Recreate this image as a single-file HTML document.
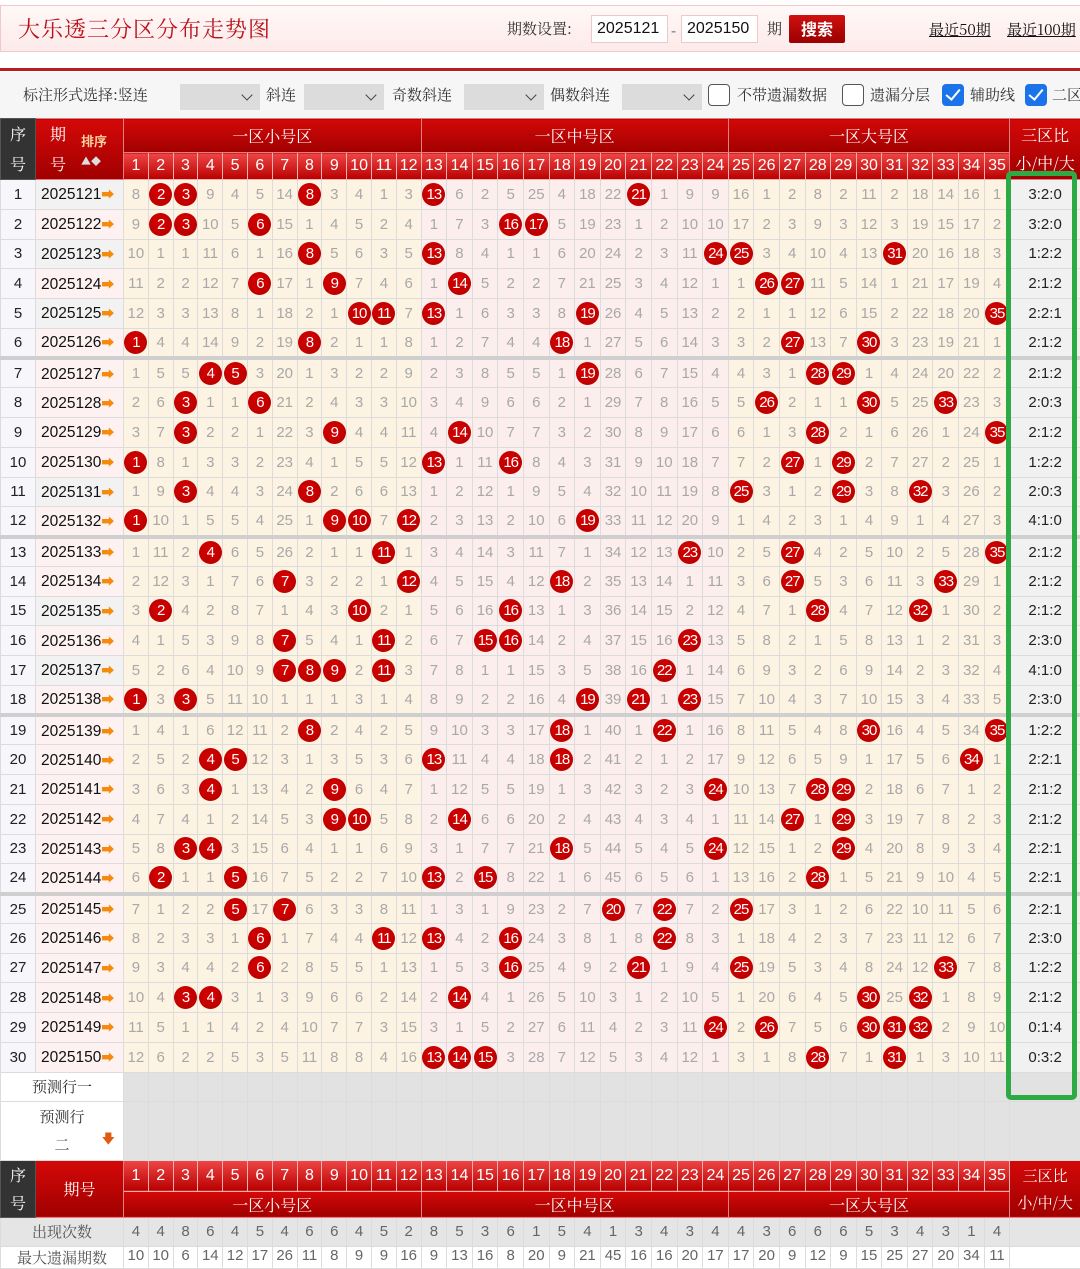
<!DOCTYPE html>
<html><head><meta charset="utf-8">
<style>
*{box-sizing:border-box}
body{margin:0;width:1080px;height:1258px;overflow:hidden;background:#fff;font-family:"Liberation Sans","Noto Sans CJK SC",sans-serif;position:relative}
.top{position:absolute;left:0;top:5px;width:1090px;height:47px;background:linear-gradient(#fff8f8,#fdeaea);border:1px solid #f0caca}
.title{position:absolute;left:18px;top:13px;font:22px "Noto Serif CJK SC",serif;color:#b8141a;letter-spacing:1px}
.lbl{position:absolute;top:18px;font:15px "Noto Serif CJK SC",serif;color:#333}
.inp{position:absolute;top:15px;width:77px;height:28px;border:1px solid #f0c8c8;background:#fff;font-size:16px;padding:4px 0 0 5px;color:#111}
.btn{position:absolute;left:789px;top:15px;width:56px;height:28px;background:linear-gradient(#d01010,#9a0000);color:#fff;font:bold 16px "Noto Sans CJK SC",sans-serif;text-align:center;line-height:27px;border-radius:2px}
.lnk{position:absolute;top:19px;font:15px "Noto Serif CJK SC",serif;color:#111;text-decoration:underline;white-space:nowrap}
.rl{position:absolute;left:0;top:68px;width:1080px;height:3px;background:#b42020}
.flt{position:absolute;left:0;top:72px;width:1080px;height:46px;background:#f6f6f6}
.ft{position:absolute;top:84px;font:15px "Noto Serif CJK SC",serif;color:#333;white-space:nowrap}
.sel{position:absolute;top:84px;width:80px;height:26px;background:#dcdcdc}
.sel:after{content:"";position:absolute;right:9px;top:7px;width:7px;height:7px;border-right:1.5px solid #444;border-bottom:1.5px solid #444;transform:rotate(45deg)}
.cb{position:absolute;top:84px;width:22px;height:22px;border:1.5px solid #555;border-radius:4px;background:#fff}
.cb.on{background:#1a73e8;border-color:#1a73e8}
.cb.on:after{content:"";position:absolute;left:6px;top:1px;width:6px;height:12px;border-right:2.5px solid #fff;border-bottom:2.5px solid #fff;transform:rotate(40deg)}
table{position:absolute;left:0;top:118px;width:1080px;table-layout:fixed;border-collapse:collapse}
td,th{padding:0;text-align:center;overflow:hidden;white-space:nowrap}
th{font-weight:normal;color:#fff}
.h1 th{height:32px;font:16px "Noto Serif CJK SC",serif;background:linear-gradient(#d40808,#a00000);border:1px solid #e08080}
.h1.lo th{height:25px}
.h2 th{height:25px;font-size:16px;background:linear-gradient(#f04646,#b80000);border:1px solid #f3b0b0}
th.dk{background:#333 !important;font:16px "Noto Serif CJK SC",serif;line-height:28px;border:1px solid #555}
th.qh{position:relative}
.px{position:absolute;left:45px;top:12px;font:bold 13px "Noto Sans CJK SC",sans-serif;color:#fcd0a0}
tbody td{border:1px solid #dcdcdc;color:#a8a8a8;font-size:15px}
.d td{height:29.75px}
td.s{color:#222;background:#f6f6fb}
td.q{color:#111;background:#fdf1f1;text-align:left;padding-left:5px;font-size:15.5px}
td.g{background:#f2f2f2}
td.q i{font-style:normal;color:#f58a0c;font-size:13px;font-weight:bold}
td.r{background:#f1f1f1;color:#222}
b{display:inline-block;width:23px;height:23px;line-height:23px;border-radius:50%;background:radial-gradient(circle at 45% 40%,#d80000,#b00000);color:#fff;font-weight:normal;font-size:15px;letter-spacing:-1px;vertical-align:middle}
.sp td{border-top:4px solid #cfcfcf}
.yc td{background:#e2e2e2}
.yc td.w{background:#fff;color:#333;font:15px "Noto Serif CJK SC",serif}
.yc td.lv{background:#e0e0f0}
.cnt td{background:#e5e5e5;height:29px;color:#666}
.cnt td.w{font:15px "Noto Serif CJK SC",serif;color:#555}
.mx td{background:#fff;height:20px;color:#666;vertical-align:top}
.green{position:absolute;left:1006px;top:171px;width:71px;height:929px;border:5px solid #2eaa44;border-radius:5px}
</style></head><body>
<div class="top"></div>
<div class="title">大乐透三分区分布走势图</div>
<div class="lbl" style="left:507px">期数设置:</div>
<div class="inp" style="left:591px">2025121</div>
<div class="lbl" style="left:671px;top:20px">-</div>
<div class="inp" style="left:681px">2025150</div>
<div class="lbl" style="left:767px">期</div>
<div class="btn">搜索</div>
<div class="lnk" style="left:929px">最近50期</div>
<div class="lnk" style="left:1007px">最近100期</div>
<div class="rl"></div>
<div class="flt"></div>
<div class="ft" style="left:23px">标注形式选择:竖连</div>
<div class="sel" style="left:180px"></div>
<div class="ft" style="left:266px">斜连</div>
<div class="sel" style="left:304px"></div>
<div class="ft" style="left:392px">奇数斜连</div>
<div class="sel" style="left:464px"></div>
<div class="ft" style="left:550px">偶数斜连</div>
<div class="sel" style="left:622px"></div>
<div class="cb" style="left:708px"></div>
<div class="ft" style="left:737px">不带遗漏数据</div>
<div class="cb" style="left:842px"></div>
<div class="ft" style="left:870px">遗漏分层</div>
<div class="cb on" style="left:942px"></div>
<div class="ft" style="left:970px">辅助线</div>
<div class="cb on" style="left:1025px"></div>
<div class="ft" style="left:1052px">二区</div>

<table>
<colgroup><col style="width:35px"><col style="width:88px">
<col span="12" style="width:24.8px;background:#fdf3e2"><col span="12" style="width:25.6px;background:#fdeeee"><col span="11" style="width:25.6px;background:#fdf3e2"><col style="width:70.6px">
</colgroup>
<thead>
<tr class="h1"><th rowspan="2" class="dk" style="line-height:30px">序<br>号</th><th rowspan="2" class="qh" style="text-align:left;padding-left:14px;line-height:30px">期<br>号<span class="px">排序<br><span style="color:#ddd;font-size:10px">▲◆</span></span></th><th colspan="12">一区小号区</th><th colspan="12">一区中号区</th><th colspan="11">一区大号区</th><th rowspan="2" style="line-height:28px">三区比<br>小/中/大</th></tr>
<tr class="h2"><th>1</th><th>2</th><th>3</th><th>4</th><th>5</th><th>6</th><th>7</th><th>8</th><th>9</th><th>10</th><th>11</th><th>12</th><th>13</th><th>14</th><th>15</th><th>16</th><th>17</th><th>18</th><th>19</th><th>20</th><th>21</th><th>22</th><th>23</th><th>24</th><th>25</th><th>26</th><th>27</th><th>28</th><th>29</th><th>30</th><th>31</th><th>32</th><th>33</th><th>34</th><th>35</th></tr>
</thead>
<tbody>
<tr class="d"><td class="s">1<td class="q g">2025121<i>➡</i><td>8<td><b>2</b><td><b>3</b><td>9<td>4<td>5<td>14<td><b>8</b><td>3<td>4<td>1<td>3<td><b>13</b><td>6<td>2<td>5<td>25<td>4<td>18<td>22<td><b>21</b><td>1<td>9<td>9<td>16<td>1<td>2<td>8<td>2<td>11<td>2<td>18<td>14<td>16<td>1<td class="r">3:2:0</tr>
<tr class="d"><td class="s">2<td class="q">2025122<i>➡</i><td>9<td><b>2</b><td><b>3</b><td>10<td>5<td><b>6</b><td>15<td>1<td>4<td>5<td>2<td>4<td>1<td>7<td>3<td><b>16</b><td><b>17</b><td>5<td>19<td>23<td>1<td>2<td>10<td>10<td>17<td>2<td>3<td>9<td>3<td>12<td>3<td>19<td>15<td>17<td>2<td class="r">3:2:0</tr>
<tr class="d"><td class="s">3<td class="q g">2025123<i>➡</i><td>10<td>1<td>1<td>11<td>6<td>1<td>16<td><b>8</b><td>5<td>6<td>3<td>5<td><b>13</b><td>8<td>4<td>1<td>1<td>6<td>20<td>24<td>2<td>3<td>11<td><b>24</b><td><b>25</b><td>3<td>4<td>10<td>4<td>13<td><b>31</b><td>20<td>16<td>18<td>3<td class="r">1:2:2</tr>
<tr class="d"><td class="s">4<td class="q">2025124<i>➡</i><td>11<td>2<td>2<td>12<td>7<td><b>6</b><td>17<td>1<td><b>9</b><td>7<td>4<td>6<td>1<td><b>14</b><td>5<td>2<td>2<td>7<td>21<td>25<td>3<td>4<td>12<td>1<td>1<td><b>26</b><td><b>27</b><td>11<td>5<td>14<td>1<td>21<td>17<td>19<td>4<td class="r">2:1:2</tr>
<tr class="d"><td class="s">5<td class="q g">2025125<i>➡</i><td>12<td>3<td>3<td>13<td>8<td>1<td>18<td>2<td>1<td><b>10</b><td><b>11</b><td>7<td><b>13</b><td>1<td>6<td>3<td>3<td>8<td><b>19</b><td>26<td>4<td>5<td>13<td>2<td>2<td>1<td>1<td>12<td>6<td>15<td>2<td>22<td>18<td>20<td><b>35</b><td class="r">2:2:1</tr>
<tr class="d"><td class="s">6<td class="q">2025126<i>➡</i><td><b>1</b><td>4<td>4<td>14<td>9<td>2<td>19<td><b>8</b><td>2<td>1<td>1<td>8<td>1<td>2<td>7<td>4<td>4<td><b>18</b><td>1<td>27<td>5<td>6<td>14<td>3<td>3<td>2<td><b>27</b><td>13<td>7<td><b>30</b><td>3<td>23<td>19<td>21<td>1<td class="r">2:1:2</tr>
<tr class="d sp"><td class="s">7<td class="q">2025127<i>➡</i><td>1<td>5<td>5<td><b>4</b><td><b>5</b><td>3<td>20<td>1<td>3<td>2<td>2<td>9<td>2<td>3<td>8<td>5<td>5<td>1<td><b>19</b><td>28<td>6<td>7<td>15<td>4<td>4<td>3<td>1<td><b>28</b><td><b>29</b><td>1<td>4<td>24<td>20<td>22<td>2<td class="r">2:1:2</tr>
<tr class="d"><td class="s">8<td class="q">2025128<i>➡</i><td>2<td>6<td><b>3</b><td>1<td>1<td><b>6</b><td>21<td>2<td>4<td>3<td>3<td>10<td>3<td>4<td>9<td>6<td>6<td>2<td>1<td>29<td>7<td>8<td>16<td>5<td>5<td><b>26</b><td>2<td>1<td>1<td><b>30</b><td>5<td>25<td><b>33</b><td>23<td>3<td class="r">2:0:3</tr>
<tr class="d"><td class="s">9<td class="q">2025129<i>➡</i><td>3<td>7<td><b>3</b><td>2<td>2<td>1<td>22<td>3<td><b>9</b><td>4<td>4<td>11<td>4<td><b>14</b><td>10<td>7<td>7<td>3<td>2<td>30<td>8<td>9<td>17<td>6<td>6<td>1<td>3<td><b>28</b><td>2<td>1<td>6<td>26<td>1<td>24<td><b>35</b><td class="r">2:1:2</tr>
<tr class="d"><td class="s">10<td class="q">2025130<i>➡</i><td><b>1</b><td>8<td>1<td>3<td>3<td>2<td>23<td>4<td>1<td>5<td>5<td>12<td><b>13</b><td>1<td>11<td><b>16</b><td>8<td>4<td>3<td>31<td>9<td>10<td>18<td>7<td>7<td>2<td><b>27</b><td>1<td><b>29</b><td>2<td>7<td>27<td>2<td>25<td>1<td class="r">1:2:2</tr>
<tr class="d"><td class="s">11<td class="q g">2025131<i>➡</i><td>1<td>9<td><b>3</b><td>4<td>4<td>3<td>24<td><b>8</b><td>2<td>6<td>6<td>13<td>1<td>2<td>12<td>1<td>9<td>5<td>4<td>32<td>10<td>11<td>19<td>8<td><b>25</b><td>3<td>1<td>2<td><b>29</b><td>3<td>8<td><b>32</b><td>3<td>26<td>2<td class="r">2:0:3</tr>
<tr class="d"><td class="s">12<td class="q">2025132<i>➡</i><td><b>1</b><td>10<td>1<td>5<td>5<td>4<td>25<td>1<td><b>9</b><td><b>10</b><td>7<td><b>12</b><td>2<td>3<td>13<td>2<td>10<td>6<td><b>19</b><td>33<td>11<td>12<td>20<td>9<td>1<td>4<td>2<td>3<td>1<td>4<td>9<td>1<td>4<td>27<td>3<td class="r">4:1:0</tr>
<tr class="d sp"><td class="s">13<td class="q">2025133<i>➡</i><td>1<td>11<td>2<td><b>4</b><td>6<td>5<td>26<td>2<td>1<td>1<td><b>11</b><td>1<td>3<td>4<td>14<td>3<td>11<td>7<td>1<td>34<td>12<td>13<td><b>23</b><td>10<td>2<td>5<td><b>27</b><td>4<td>2<td>5<td>10<td>2<td>5<td>28<td><b>35</b><td class="r">2:1:2</tr>
<tr class="d"><td class="s">14<td class="q">2025134<i>➡</i><td>2<td>12<td>3<td>1<td>7<td>6<td><b>7</b><td>3<td>2<td>2<td>1<td><b>12</b><td>4<td>5<td>15<td>4<td>12<td><b>18</b><td>2<td>35<td>13<td>14<td>1<td>11<td>3<td>6<td><b>27</b><td>5<td>3<td>6<td>11<td>3<td><b>33</b><td>29<td>1<td class="r">2:1:2</tr>
<tr class="d"><td class="s">15<td class="q g">2025135<i>➡</i><td>3<td><b>2</b><td>4<td>2<td>8<td>7<td>1<td>4<td>3<td><b>10</b><td>2<td>1<td>5<td>6<td>16<td><b>16</b><td>13<td>1<td>3<td>36<td>14<td>15<td>2<td>12<td>4<td>7<td>1<td><b>28</b><td>4<td>7<td>12<td><b>32</b><td>1<td>30<td>2<td class="r">2:1:2</tr>
<tr class="d"><td class="s">16<td class="q">2025136<i>➡</i><td>4<td>1<td>5<td>3<td>9<td>8<td><b>7</b><td>5<td>4<td>1<td><b>11</b><td>2<td>6<td>7<td><b>15</b><td><b>16</b><td>14<td>2<td>4<td>37<td>15<td>16<td><b>23</b><td>13<td>5<td>8<td>2<td>1<td>5<td>8<td>13<td>1<td>2<td>31<td>3<td class="r">2:3:0</tr>
<tr class="d"><td class="s">17<td class="q g">2025137<i>➡</i><td>5<td>2<td>6<td>4<td>10<td>9<td><b>7</b><td><b>8</b><td><b>9</b><td>2<td><b>11</b><td>3<td>7<td>8<td>1<td>1<td>15<td>3<td>5<td>38<td>16<td><b>22</b><td>1<td>14<td>6<td>9<td>3<td>2<td>6<td>9<td>14<td>2<td>3<td>32<td>4<td class="r">4:1:0</tr>
<tr class="d"><td class="s">18<td class="q">2025138<i>➡</i><td><b>1</b><td>3<td><b>3</b><td>5<td>11<td>10<td>1<td>1<td>1<td>3<td>1<td>4<td>8<td>9<td>2<td>2<td>16<td>4<td><b>19</b><td>39<td><b>21</b><td>1<td><b>23</b><td>15<td>7<td>10<td>4<td>3<td>7<td>10<td>15<td>3<td>4<td>33<td>5<td class="r">2:3:0</tr>
<tr class="d sp"><td class="s">19<td class="q">2025139<i>➡</i><td>1<td>4<td>1<td>6<td>12<td>11<td>2<td><b>8</b><td>2<td>4<td>2<td>5<td>9<td>10<td>3<td>3<td>17<td><b>18</b><td>1<td>40<td>1<td><b>22</b><td>1<td>16<td>8<td>11<td>5<td>4<td>8<td><b>30</b><td>16<td>4<td>5<td>34<td><b>35</b><td class="r">1:2:2</tr>
<tr class="d"><td class="s">20<td class="q">2025140<i>➡</i><td>2<td>5<td>2<td><b>4</b><td><b>5</b><td>12<td>3<td>1<td>3<td>5<td>3<td>6<td><b>13</b><td>11<td>4<td>4<td>18<td><b>18</b><td>2<td>41<td>2<td>1<td>2<td>17<td>9<td>12<td>6<td>5<td>9<td>1<td>17<td>5<td>6<td><b>34</b><td>1<td class="r">2:2:1</tr>
<tr class="d"><td class="s">21<td class="q">2025141<i>➡</i><td>3<td>6<td>3<td><b>4</b><td>1<td>13<td>4<td>2<td><b>9</b><td>6<td>4<td>7<td>1<td>12<td>5<td>5<td>19<td>1<td>3<td>42<td>3<td>2<td>3<td><b>24</b><td>10<td>13<td>7<td><b>28</b><td><b>29</b><td>2<td>18<td>6<td>7<td>1<td>2<td class="r">2:1:2</tr>
<tr class="d"><td class="s">22<td class="q">2025142<i>➡</i><td>4<td>7<td>4<td>1<td>2<td>14<td>5<td>3<td><b>9</b><td><b>10</b><td>5<td>8<td>2<td><b>14</b><td>6<td>6<td>20<td>2<td>4<td>43<td>4<td>3<td>4<td>1<td>11<td>14<td><b>27</b><td>1<td><b>29</b><td>3<td>19<td>7<td>8<td>2<td>3<td class="r">2:1:2</tr>
<tr class="d"><td class="s">23<td class="q">2025143<i>➡</i><td>5<td>8<td><b>3</b><td><b>4</b><td>3<td>15<td>6<td>4<td>1<td>1<td>6<td>9<td>3<td>1<td>7<td>7<td>21<td><b>18</b><td>5<td>44<td>5<td>4<td>5<td><b>24</b><td>12<td>15<td>1<td>2<td><b>29</b><td>4<td>20<td>8<td>9<td>3<td>4<td class="r">2:2:1</tr>
<tr class="d"><td class="s">24<td class="q">2025144<i>➡</i><td>6<td><b>2</b><td>1<td>1<td><b>5</b><td>16<td>7<td>5<td>2<td>2<td>7<td>10<td><b>13</b><td>2<td><b>15</b><td>8<td>22<td>1<td>6<td>45<td>6<td>5<td>6<td>1<td>13<td>16<td>2<td><b>28</b><td>1<td>5<td>21<td>9<td>10<td>4<td>5<td class="r">2:2:1</tr>
<tr class="d sp"><td class="s">25<td class="q">2025145<i>➡</i><td>7<td>1<td>2<td>2<td><b>5</b><td>17<td><b>7</b><td>6<td>3<td>3<td>8<td>11<td>1<td>3<td>1<td>9<td>23<td>2<td>7<td><b>20</b><td>7<td><b>22</b><td>7<td>2<td><b>25</b><td>17<td>3<td>1<td>2<td>6<td>22<td>10<td>11<td>5<td>6<td class="r">2:2:1</tr>
<tr class="d"><td class="s">26<td class="q">2025146<i>➡</i><td>8<td>2<td>3<td>3<td>1<td><b>6</b><td>1<td>7<td>4<td>4<td><b>11</b><td>12<td><b>13</b><td>4<td>2<td><b>16</b><td>24<td>3<td>8<td>1<td>8<td><b>22</b><td>8<td>3<td>1<td>18<td>4<td>2<td>3<td>7<td>23<td>11<td>12<td>6<td>7<td class="r">2:3:0</tr>
<tr class="d"><td class="s">27<td class="q">2025147<i>➡</i><td>9<td>3<td>4<td>4<td>2<td><b>6</b><td>2<td>8<td>5<td>5<td>1<td>13<td>1<td>5<td>3<td><b>16</b><td>25<td>4<td>9<td>2<td><b>21</b><td>1<td>9<td>4<td><b>25</b><td>19<td>5<td>3<td>4<td>8<td>24<td>12<td><b>33</b><td>7<td>8<td class="r">1:2:2</tr>
<tr class="d"><td class="s">28<td class="q">2025148<i>➡</i><td>10<td>4<td><b>3</b><td><b>4</b><td>3<td>1<td>3<td>9<td>6<td>6<td>2<td>14<td>2<td><b>14</b><td>4<td>1<td>26<td>5<td>10<td>3<td>1<td>2<td>10<td>5<td>1<td>20<td>6<td>4<td>5<td><b>30</b><td>25<td><b>32</b><td>1<td>8<td>9<td class="r">2:1:2</tr>
<tr class="d"><td class="s">29<td class="q">2025149<i>➡</i><td>11<td>5<td>1<td>1<td>4<td>2<td>4<td>10<td>7<td>7<td>3<td>15<td>3<td>1<td>5<td>2<td>27<td>6<td>11<td>4<td>2<td>3<td>11<td><b>24</b><td>2<td><b>26</b><td>7<td>5<td>6<td><b>30</b><td><b>31</b><td><b>32</b><td>2<td>9<td>10<td class="r">0:1:4</tr>
<tr class="d"><td class="s">30<td class="q">2025150<i>➡</i><td>12<td>6<td>2<td>2<td>5<td>3<td>5<td>11<td>8<td>8<td>4<td>16<td><b>13</b><td><b>14</b><td><b>15</b><td>3<td>28<td>7<td>12<td>5<td>3<td>4<td>12<td>1<td>3<td>1<td>8<td><b>28</b><td>7<td>1<td><b>31</b><td>1<td>3<td>10<td>11<td class="r">0:3:2</tr>
<tr class="yc" style="height:29px"><td colspan="2" class="w">预测行一<td><td><td><td><td><td><td><td><td><td><td><td><td><td><td><td><td><td><td><td><td><td><td><td><td><td><td><td><td><td><td><td><td><td><td><td><td class="lv"></tr>
<tr class="yc" style="height:59px"><td colspan="2" class="w" style="line-height:28px;position:relative">预测行<br>二<span style="position:absolute;right:8px;top:22px;color:#e05a10;font-size:13px">🡇</span><td><td><td><td><td><td><td><td><td><td><td><td><td><td><td><td><td><td><td><td><td><td><td><td><td><td><td><td><td><td><td><td><td><td><td><td><td class="lv"></tr>
</tbody>
<tbody>
<tr class="h2" style="height:30px"><th rowspan="2" class="dk">序<br>号</th><th rowspan="2" style="font:16px 'Noto Serif CJK SC',serif;background:linear-gradient(#d40808,#a00000);border:1px solid #e08080">期号</th><th style="height:30px">1</th><th>2</th><th>3</th><th>4</th><th>5</th><th>6</th><th>7</th><th>8</th><th>9</th><th>10</th><th>11</th><th>12</th><th>13</th><th>14</th><th>15</th><th>16</th><th>17</th><th>18</th><th>19</th><th>20</th><th>21</th><th>22</th><th>23</th><th>24</th><th>25</th><th>26</th><th>27</th><th>28</th><th>29</th><th>30</th><th>31</th><th>32</th><th>33</th><th>34</th><th>35</th><th rowspan="2" style="font:15px 'Noto Serif CJK SC',serif;line-height:27px;background:linear-gradient(#d40808,#a00000);border:1px solid #e08080">三区比<br>小/中/大</th></tr>
<tr class="h1 lo"><th colspan="12">一区小号区</th><th colspan="12">一区中号区</th><th colspan="11">一区大号区</th></tr>
</tbody>
<tbody>
<tr class="cnt"><td colspan="2" class="w">出现次数<td>4<td>4<td>8<td>6<td>4<td>5<td>4<td>6<td>6<td>4<td>5<td>2<td>8<td>5<td>3<td>6<td>1<td>5<td>4<td>1<td>3<td>4<td>3<td>4<td>4<td>3<td>6<td>6<td>6<td>5<td>3<td>4<td>3<td>1<td>4<td></tr>
<tr class="mx"><td colspan="2" style="font:15px 'Noto Serif CJK SC',serif;color:#555">最大遗漏期数<td>10<td>10<td>6<td>14<td>12<td>17<td>26<td>11<td>8<td>9<td>9<td>16<td>9<td>13<td>16<td>8<td>20<td>9<td>21<td>45<td>16<td>16<td>20<td>17<td>17<td>20<td>9<td>12<td>9<td>15<td>25<td>27<td>20<td>34<td>11<td></tr>
</tbody>
</table>
<div class="green"></div>
</body></html>
